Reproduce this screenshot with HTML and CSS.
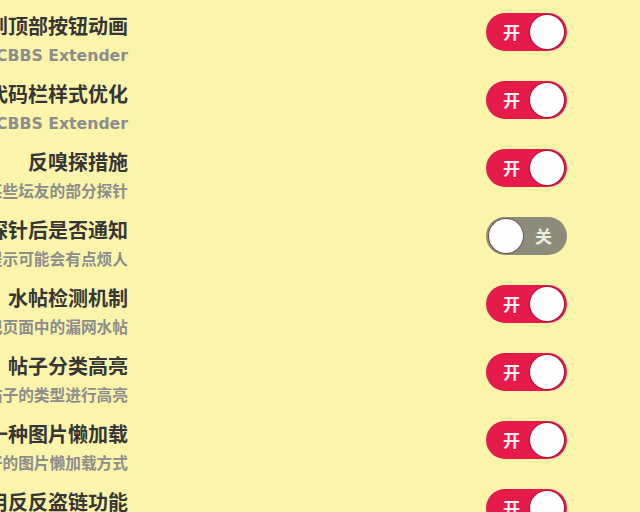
FILE: index.html
```html
<!DOCTYPE html>
<html lang="zh-CN">
<head>
<meta charset="utf-8">
<title>设置</title>
<link rel="stylesheet" href="styles.css">
</head>
<body>
<div class="list">
  <div class="row">
    <div class="label"><div class="title">回到顶部按钮动画</div><div class="sub">MCBBS Extender</div></div>
    <div class="toggle on"><span class="txt">开</span><span class="knob"></span></div>
  </div>
  <div class="row">
    <div class="label"><div class="title">代码栏样式优化</div><div class="sub">MCBBS Extender</div></div>
    <div class="toggle on"><span class="txt">开</span><span class="knob"></span></div>
  </div>
  <div class="row">
    <div class="label"><div class="title">反嗅探措施</div><div class="sub">屏蔽某些坛友的部分探针</div></div>
    <div class="toggle on"><span class="txt">开</span><span class="knob"></span></div>
  </div>
  <div class="row">
    <div class="label"><div class="title">发现探针后是否通知</div><div class="sub">提示可能会有点烦人</div></div>
    <div class="toggle off"><span class="knob"></span><span class="txt">关</span></div>
  </div>
  <div class="row">
    <div class="label"><div class="title">水帖检测机制</div><div class="sub">标记页面中的漏网水帖</div></div>
    <div class="toggle on"><span class="txt">开</span><span class="knob"></span></div>
  </div>
  <div class="row">
    <div class="label"><div class="title">帖子分类高亮</div><div class="sub">对帖子的类型进行高亮</div></div>
    <div class="toggle on"><span class="txt">开</span><span class="knob"></span></div>
  </div>
  <div class="row">
    <div class="label"><div class="title">另一种图片懒加载</div><div class="sub">更好的图片懒加载方式</div></div>
    <div class="toggle on"><span class="txt">开</span><span class="knob"></span></div>
  </div>
  <div class="row">
    <div class="label"><div class="title">启用反反盗链功能</div><div class="sub">防止图片无法加载</div></div>
    <div class="toggle on"><span class="txt">开</span><span class="knob"></span></div>
  </div>
</div>
</body>
</html>
```

FILE: styles.css
```css
html, body {
  margin: 0;
  padding: 0;
  background: #fbf5ac;
  overflow: hidden;
  height: 512px;
}
body {
  font-family: "DejaVu Sans", "Noto Sans CJK SC", sans-serif;
}
.list {
  display: flex;
  flex-direction: column;
}
.row {
  height: 68px;
  display: grid;
  grid-template-columns: 128px 1fr 82px;
  align-items: start;
  padding-right: 72px;
}
.label {
  grid-column: 1;
  display: flex;
  flex-direction: column;
  align-items: flex-end;
  padding-top: 15px;
  white-space: nowrap;
}
.title {
  font-size: 20px;
  line-height: 25px;
  font-weight: bold;
  color: #363636;
}
.sub {
  font-size: 15.7px;
  line-height: 26px;
  font-weight: bold;
  color: #8d8d8d;
  margin-top: 3px;
}
.toggle {
  grid-column: 3;
  margin-top: 13px;
  height: 38px;
  width: 81px;
  border-radius: 19px;
  display: flex;
  align-items: center;
  justify-content: space-between;
  padding: 0 3px 0 3px;
  box-sizing: border-box;
}
.toggle.on {
  background: #e71a4c;
}
.toggle.off {
  background: #8d8c7a;
}
.knob {
  width: 34px;
  height: 34px;
  border-radius: 50%;
  background: #fefefe;
  box-shadow: 0 0 0 1px rgba(90, 20, 40, 0.45);
}
.txt {
  flex: 1;
  text-align: center;
  font-family: "Noto Sans CJK SC", sans-serif;
  font-size: 17px;
  font-weight: bold;
  color: #f6f0f0;
  line-height: 20px;
}
.toggle.on .txt {
  padding-left: 4px;
}
.toggle.off .txt {
  color: #ecece4;
}
```
